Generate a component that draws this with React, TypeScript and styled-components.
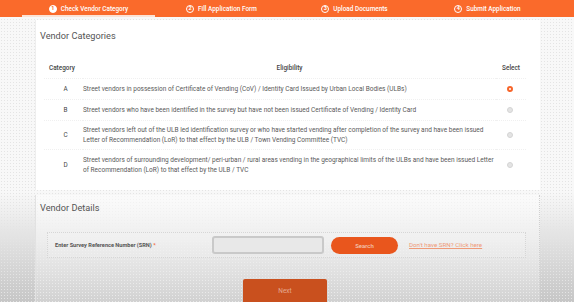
import React from "react";
import styled, { createGlobalStyle } from "styled-components";

const GlobalStyle = createGlobalStyle`
  html, body { margin: 0; padding: 0; }
  body {
    font-family: Roboto, "Liberation Sans", Arial, sans-serif;
    background-color: #f6f6f6;
    background-image:
      radial-gradient(#e4e4e4 0.6px, transparent 0.7px),
      linear-gradient(to bottom, #f8f8f8 0px, #f8f8f8 192px, #e6e6e6 230px, #c6c6c6 302px);
    background-size: 3px 3px, 100% 302px;
    background-repeat: repeat, no-repeat;
    height: 302px;
    overflow: hidden;
  }
`;

const Page = styled.div`
  width: 574px;
  height: 302px;
  overflow: hidden;
  display: flex;
  flex-direction: column;
`;

const Stepper = styled.div`
  height: 17px;
  background: #fa6a2b;
  display: flex;
  padding: 0 20px 0 22px;
  flex-shrink: 0;
`;

const Step = styled.div<{ $active?: boolean }>`
  flex: 1;
  display: flex;
  align-items: center;
  justify-content: center;
  gap: 4px;
  box-sizing: border-box;
  border-bottom: 2px solid ${(p) => (p.$active ? "#fbe3d6" : "transparent")};
  padding-top: 2px;
  color: #ffffff;
  font-size: 6.4px;
  font-weight: 500;
  white-space: nowrap;
`;

const StepNum = styled.span<{ $active?: boolean }>`
  width: 8px;
  height: 8px;
  border-radius: 50%;
  box-sizing: border-box;
  border: 1px solid #ffffff;
  background: ${(p) => (p.$active ? "#ffffff" : "transparent")};
  color: ${(p) => (p.$active ? "#fa6a2b" : "#ffffff")};
  display: flex;
  align-items: center;
  justify-content: center;
  font-size: 5.5px;
  font-weight: 700;
  line-height: 1;
`;

const Main = styled.div`
  padding: 3px 34px 0 35px;
  display: flex;
  flex-direction: column;
  gap: 5px;
`;

const Card = styled.section`
  background: #ffffff;
  height: 170px;
  box-sizing: border-box;
  padding: 10px 14px 0 4px;
  border-left: 1px solid #eeeeee;
`;

const Heading = styled.h2`
  margin: 0;
  font-size: 9.2px;
  font-weight: 400;
  color: #555555;
  line-height: 12px;
`;

const Table = styled.div`
  margin-top: 16px;
  margin-left: 4px;
  display: grid;
  grid-template-columns: 39px 1fr 30px;
`;

const HeadCell = styled.div<{ $align?: string }>`
  font-size: 6.4px;
  font-weight: 500;
  color: #444444;
  height: 20px;
  display: flex;
  align-items: center;
  justify-content: ${(p) => (p.$align === "center" ? "center" : "flex-start")};
  padding-left: ${(p) => (p.$align === "center" ? "0" : "5px")};
`;

const Cell = styled.div<{ $h: number; $center?: boolean }>`
  height: ${(p) => p.$h}px;
  display: flex;
  align-items: center;
  justify-content: ${(p) => (p.$center ? "center" : "flex-start")};
  border-top: 1px dotted #f0f0f0;
  font-size: 6.5px;
  line-height: 10px;
  color: #5a5a5a;
  box-sizing: border-box;
`;

const Letter = styled.span`
  font-size: 6.4px;
  color: #444444;
  padding-left: 4px;
`;

const Radio = styled.span<{ $checked?: boolean }>`
  width: 6px;
  height: 6px;
  border-radius: 50%;
  box-sizing: border-box;
  border: ${(p) => (p.$checked ? "2px solid #f7652a" : "1px solid #d4d4d4")};
  background: ${(p) => (p.$checked ? "#ffffff" : "#e4e4e4")};
  margin-left: -2px;
`;

const DetailsCard = styled.section`
  height: 120px;
  box-sizing: border-box;
  padding: 7px 13px 0 4px;
  border-left: 1px solid #e2e2e2;
  border-right: 1px dotted #d0d0d0;
  background: linear-gradient(to bottom, rgba(255,255,255,0.55), rgba(255,255,255,0.15));
  display: flex;
  flex-direction: column;
`;

const SrnBox = styled.div`
  margin-top: 18px;
  margin-left: 7px;
  height: 26px;
  box-sizing: border-box;
  border: 1px dotted #d6d6d6;
  display: flex;
  align-items: center;
  padding-left: 7px;
  background: rgba(255,255,255,0.12);
`;

const Label = styled.span`
  width: 157px;
  font-size: 5.6px;
  font-weight: 700;
  color: #555555;
  white-space: nowrap;
`;

const Req = styled.span`
  color: #f06a3a;
`;

const Input = styled.div`
  width: 112px;
  height: 18px;
  box-sizing: border-box;
  border: 2px solid #c9c9c9;
  border-radius: 3px;
  background: #e8e8e8;
`;

const SearchBtn = styled.button`
  margin-left: 7px;
  width: 67px;
  height: 17px;
  border: none;
  border-radius: 9px;
  background: #e9561d;
  color: #f3c7b4;
  font-family: inherit;
  font-size: 6px;
  font-weight: 500;
  padding: 0;
`;

const Link = styled.a`
  margin-left: 11px;
  font-size: 6.2px;
  color: #ef9a78;
  text-decoration: underline;
  white-space: nowrap;
`;

const NextWrap = styled.div`
  display: flex;
  justify-content: center;
  margin-top: 21px;
  padding-left: 4px;
`;

const NextBtn = styled.button`
  width: 84px;
  height: 26px;
  border: none;
  border-radius: 2px;
  background: #c9501e;
  color: #e5a98f;
  font-family: inherit;
  font-size: 6.5px;
  padding: 0 0 2px;
`;

const Text = styled.span`
  max-width: 414px;
`;

const rows = [
  {
    c: "A",
    h: 21,
    t: "Street vendors in possession of Certificate of Vending (CoV) / Identity Card Issued by Urban Local Bodies (ULBs)",
    sel: true,
  },
  {
    c: "B",
    h: 21,
    t: "Street vendors who have been identified in the survey but have not been issued Certificate of Vending / Identity Card",
  },
  {
    c: "C",
    h: 29,
    t: "Street vendors left out of the ULB led identification survey or who have started vending after completion of the survey and have been issued Letter of Recommendation (LoR) to that effect by the ULB / Town Vending Committee (TVC)",
  },
  {
    c: "D",
    h: 30,
    t: "Street vendors of surrounding development/ peri-urban / rural areas vending in the geographical limits of the ULBs and have been issued Letter of Recommendation (LoR) to that effect by the ULB / TVC",
  },
];

export default function App() {
  const steps = ["Check Vendor Category", "Fill Application Form", "Upload Documents", "Submit Application"];
  return (
    <Page>
      <GlobalStyle />
      <Stepper>
        {steps.map((s, i) => (
          <Step key={s} $active={i === 0}>
            <StepNum $active={i === 0}>{i + 1}</StepNum>
            {s}
          </Step>
        ))}
      </Stepper>
      <Main>
        <Card>
          <Heading>Vendor Categories</Heading>
          <Table>
            <HeadCell>Category</HeadCell>
            <HeadCell $align="center">Eligibility</HeadCell>
            <HeadCell $align="center">Select</HeadCell>
            {rows.map((r) => (
              <React.Fragment key={r.c}>
                <Cell $h={r.h} $center>
                  <Letter>{r.c}</Letter>
                </Cell>
                <Cell $h={r.h}>
                  <Text>{r.t}</Text>
                </Cell>
                <Cell $h={r.h} $center>
                  <Radio $checked={r.sel} />
                </Cell>
              </React.Fragment>
            ))}
          </Table>
        </Card>
        <DetailsCard>
          <Heading>Vendor Details</Heading>
          <SrnBox>
            <Label>
              Enter Survey Reference Number (SRN) <Req>*</Req>
            </Label>
            <Input />
            <SearchBtn>Search</SearchBtn>
            <Link>Don't have SRN? Click here</Link>
          </SrnBox>
          <NextWrap>
            <NextBtn>Next</NextBtn>
          </NextWrap>
        </DetailsCard>
      </Main>
    </Page>
  );
}
